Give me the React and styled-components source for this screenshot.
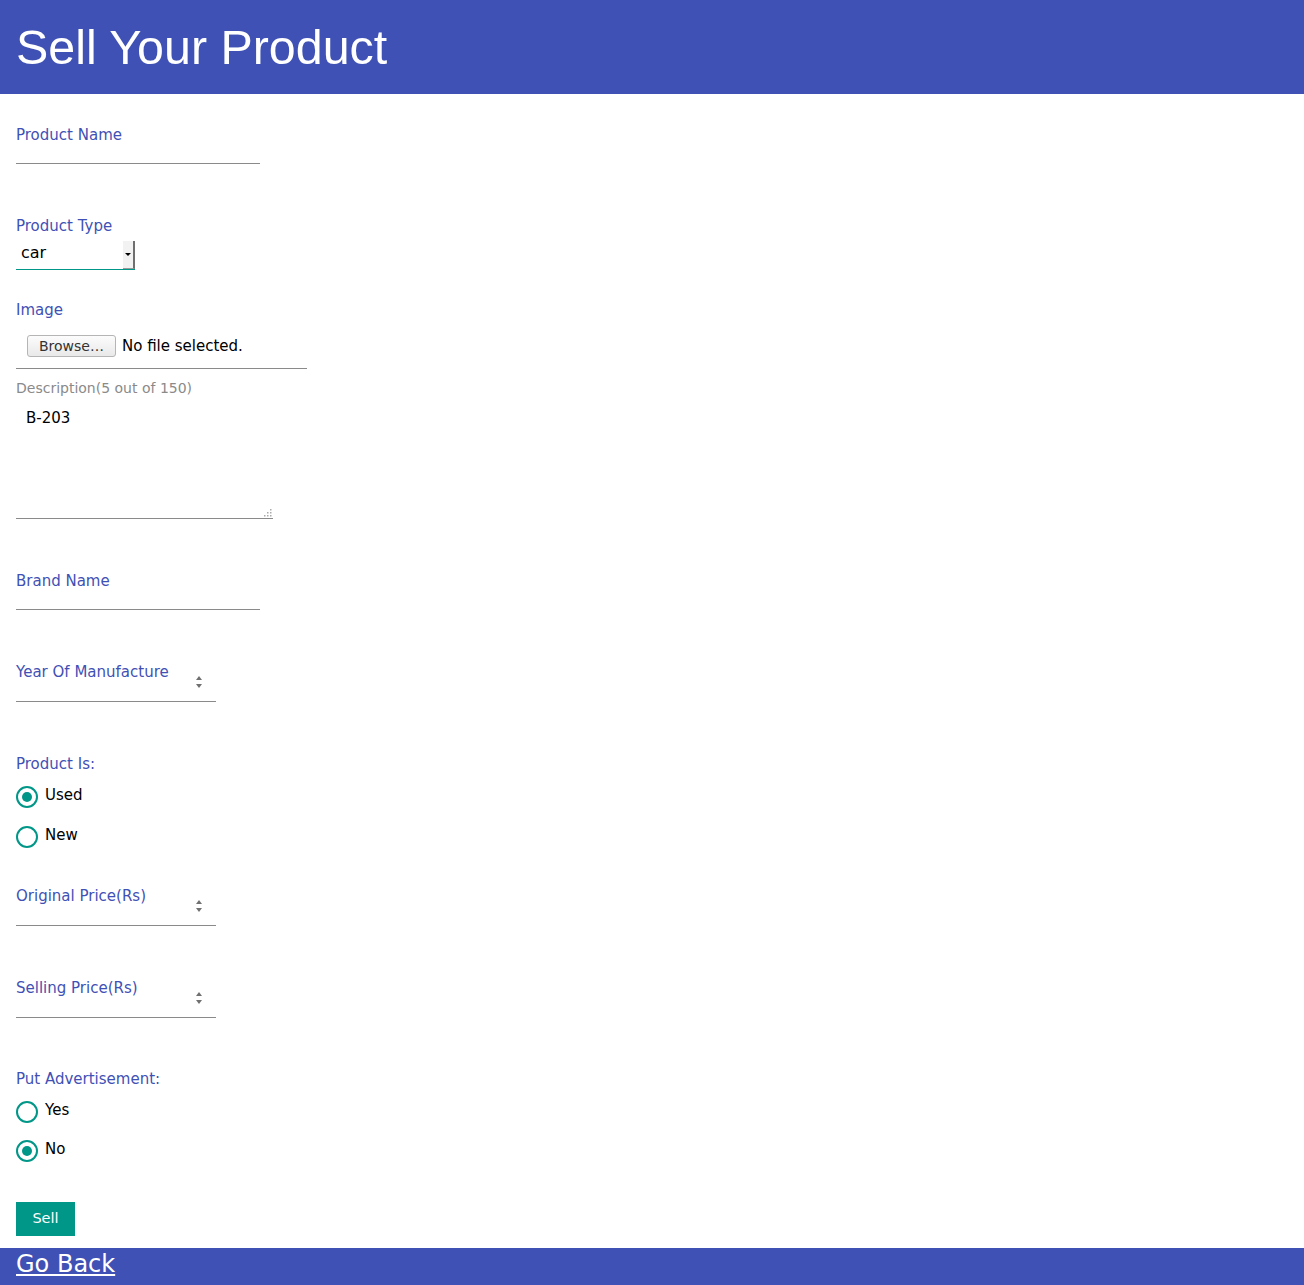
import React from 'react';
import styled, { createGlobalStyle } from 'styled-components';

const GlobalStyle = createGlobalStyle`
    body {
        margin: 0;
        font-family: "DejaVu Sans", sans-serif;
        background: #fff;
    }
    * { box-sizing: border-box; }
`;

const Page = styled.div`
    width: 100%;
    min-height: 1285px;
    display: flex;
    flex-direction: column;
`;

const Header = styled.header`
    height: 94px;
    background-color: #3f51b5;
    padding-left: 16px;
`;

const Title = styled.h1`
    margin: 0;
    font-family: "Liberation Sans", Arial, sans-serif;
    font-weight: normal;
    font-size: 48.4px;
    line-height: 94px;
    color: #fff;
`;

const Form = styled.form`
    display: flex;
    flex-direction: column;
    align-items: flex-start;
    padding: 0 16px;
`;

const Group = styled.div`
    position: relative;
    display: flex;
    flex-direction: column;
    margin-top: ${p => p.gap}px;
    width: ${p => p.width ? p.width + 'px' : 'auto'};
`;

const Label = styled.label`
    font-size: 15px;
    line-height: 20px;
    padding-top: 1px;
    color: #3f51b5;
`;

const SmallLabel = styled.label`
    font-size: 14px;
    line-height: 16px;
    color: #8a8a8a;
`;

const TextInput = styled.input`
    width: 100%;
    height: ${p => p.tall ? 20 : 19}px;
    border: none;
    border-bottom: 1px solid #8a8a8a;
    outline: none;
    font-family: inherit;
    font-size: 15px;
    padding: 0;
    background: transparent;
    -moz-appearance: textfield;
    &::-webkit-inner-spin-button,
    &::-webkit-outer-spin-button {
        -webkit-appearance: none;
        margin: 0;
    }
`;

const Spinner = styled.span`
    position: absolute;
    right: 14px;
    top: 15px;
    display: flex;
    flex-direction: column;
    gap: 4px;
    pointer-events: none;
    &::before, &::after {
        content: "";
        width: 0;
        height: 0;
        border-left: 3px solid transparent;
        border-right: 3px solid transparent;
    }
    &::before { border-bottom: 4px solid #707070; }
    &::after { border-top: 4px solid #707070; }
`;

const SelectBox = styled.div`
    position: relative;
    width: 119px;
    height: 34px;
`;

const Select = styled.select`
    appearance: none;
    -webkit-appearance: none;
    width: 100%;
    height: 34px;
    border: none;
    border-bottom: 1px solid #009688;
    border-radius: 0;
    background: transparent;
    font-family: inherit;
    font-size: 16px;
    color: #000;
    padding: 0 0 0 5px;
    outline: none;
`;

const Arrow = styled.span`
    position: absolute;
    right: 0;
    top: 5px;
    width: 12px;
    height: 28px;
    background: #f2f2f2;
    border-right: 2px solid #6f6f6f;
    border-bottom: 1px solid #9a9a9a;
    display: flex;
    align-items: center;
    justify-content: center;
    pointer-events: none;
    &::after {
        content: "";
        border-left: 3px solid transparent;
        border-right: 3px solid transparent;
        border-top: 3px solid #000;
    }
`;

const FileRow = styled.div`
    width: 291px;
    display: flex;
    align-items: center;
    padding: 15px 0 11px 11px;
    border-bottom: 1px solid #8a8a8a;
`;

const BrowseButton = styled.button`
    width: 89px;
    height: 22px;
    padding: 0;
    border: 1px solid #b5b5b5;
    border-radius: 3px;
    background: linear-gradient(#fcfcfc, #e9e9e9);
    font-family: inherit;
    font-size: 14px;
    color: #333;
    line-height: 20px;
`;

const FileText = styled.span`
    margin-left: 6px;
    font-size: 15px;
    color: #000;
`;

const TextArea = styled.textarea`
    width: 257px;
    height: 121px;
    margin-top: 2px;
    border: none;
    border-bottom: 1px solid #8a8a8a;
    outline: none;
    resize: none;
    padding: 11px 10px 8px;
    font-family: inherit;
    font-size: 15px;
    line-height: 18px;
    color: #000;
`;

const Grip = styled.svg`
    position: absolute;
    right: 1px;
    bottom: 2px;
`;

const RadioList = styled.div`
    display: flex;
    flex-direction: column;
    gap: ${p => p.spacing}px;
    margin-top: ${p => p.gap}px;
`;

const RadioRow = styled.label`
    display: flex;
    align-items: center;
    gap: 7px;
    height: 22px;
    font-size: 15px;
    color: #000;
    cursor: pointer;
`;

const Circle = styled.span`
    width: 22px;
    height: 22px;
    border: 2px solid #009688;
    border-radius: 50%;
    display: flex;
    align-items: center;
    justify-content: center;
    &::after {
        content: "";
        width: 10px;
        height: 10px;
        border-radius: 50%;
        background: ${p => p.checked ? '#009688' : 'transparent'};
    }
`;

const RadioText = styled.span`
    margin-bottom: 5px;
`;

const SellButton = styled.button`
    margin-top: 40px;
    width: 59px;
    height: 34px;
    border: none;
    background: #009688;
    color: #fff;
    font-family: inherit;
    font-size: 14.5px;
    padding: 0 0 3px;
`;

const Footer = styled.footer`
    margin-top: 12px;
    height: 37px;
    background: #3f51b5;
    padding: 0 16px 5px;
`;

const BackLink = styled.a`
    font-size: 24px;
    line-height: 32px;
    color: #fff;
    text-decoration: underline;
`;

function Radio({ label, checked }) {
    return (
        <RadioRow>
            <Circle checked={checked} />
            <RadioText>{label}</RadioText>
        </RadioRow>
    );
}

function NumberField({ gap, label }) {
    return (
        <Group gap={gap} width={200}>
            <Label>{label}</Label>
            <TextInput type="number" tall />
            <Spinner />
        </Group>
    );
}

export default function App() {
    const [type, setType] = React.useState('car');
    const [desc, setDesc] = React.useState('B-203');

    return (
        <Page>
            <GlobalStyle />
            <Header>
                <Title>Sell Your Product</Title>
            </Header>
            <Form onSubmit={e => e.preventDefault()}>
                <Group gap={30} width={244}>
                    <Label>Product Name</Label>
                    <TextInput type="text" />
                </Group>

                <Group gap={51}>
                    <Label>Product Type</Label>
                    <SelectBox>
                        <Select value={type} onChange={e => setType(e.target.value)}>
                            <option value="car">car</option>
                            <option value="bike">bike</option>
                            <option value="mobile">mobile</option>
                        </Select>
                        <Arrow />
                    </SelectBox>
                </Group>

                <Group gap={29}>
                    <Label>Image</Label>
                    <FileRow>
                        <BrowseButton type="button">Browse…</BrowseButton>
                        <FileText>No file selected.</FileText>
                    </FileRow>
                </Group>

                <Group gap={11}>
                    <SmallLabel>Description(5 out of 150)</SmallLabel>
                    <TextArea value={desc} onChange={e => setDesc(e.target.value)} />
                    <Grip width="9" height="9" viewBox="0 0 9 9">
                        {[[7, 1], [4, 4], [7, 4], [1, 7], [4, 7], [7, 7]].map(([x, y]) => (
                            <rect key={x + '-' + y} x={x} y={y} width="1.5" height="1.5" fill="#aaa" />
                        ))}
                    </Grip>
                </Group>

                <Group gap={51} width={244}>
                    <Label>Brand Name</Label>
                    <TextInput type="text" />
                </Group>

                <NumberField gap={51} label="Year Of Manufacture" />

                <Group gap={51}>
                    <Label>Product Is:</Label>
                    <RadioList gap={12} spacing={18}>
                        <Radio label="Used" checked />
                        <Radio label="New" />
                    </RadioList>
                </Group>

                <NumberField gap={37} label="Original Price(Rs)" />
                <NumberField gap={51} label="Selling Price(Rs)" />

                <Group gap={50}>
                    <Label>Put Advertisement:</Label>
                    <RadioList gap={12} spacing={17}>
                        <Radio label="Yes" />
                        <Radio label="No" checked />
                    </RadioList>
                </Group>

                <SellButton type="submit">Sell</SellButton>
            </Form>
            <Footer>
                <BackLink href="#">Go Back</BackLink>
            </Footer>
        </Page>
    );
}
